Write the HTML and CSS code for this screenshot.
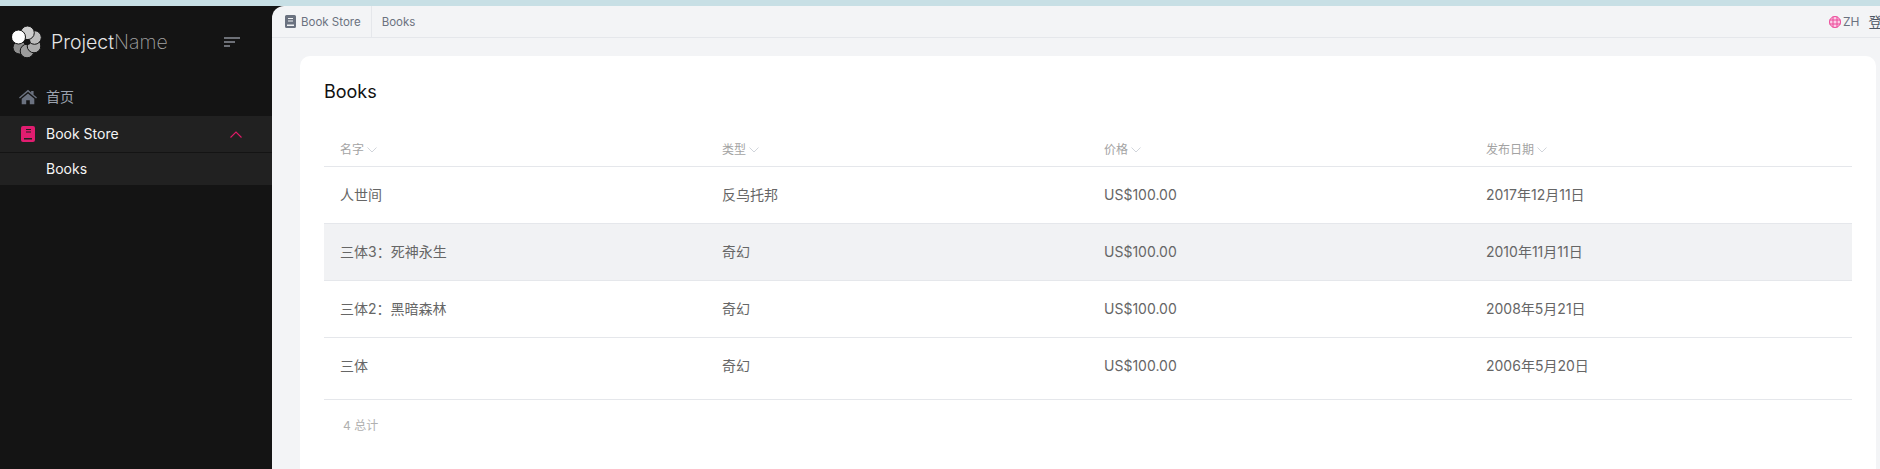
FILE: index.html
```html
<!DOCTYPE html>
<html lang="zh">
  <head>
    <meta charset="UTF-8" />
    <title>Books</title>
    <link rel="stylesheet" href="styles.css">
  </head>
  <body>
    <div class="topStrip"></div>
    <div class="app">
      <aside class="sidebar">
        <div class="brand">
          <svg class="logo" viewBox="0 0 30 32" width="30" height="32">
            <g stroke="#141414" stroke-width="1">
              <circle cx="7.500" cy="21.500" r="6.500" fill="#8e8e8e"/>
              <circle cx="15" cy="25" r="6.800" fill="#9c9c9c"/>
              <circle cx="22" cy="20" r="6.800" fill="#acacac"/>
              <circle cx="22.500" cy="11.500" r="6.800" fill="#bdbdbd"/>
              <circle cx="15.500" cy="6.800" r="6.800" fill="#cfcfcf"/>
            </g>
            <circle cx="15.500" cy="16" r="3" fill="#141414"/>
            <circle cx="6.500" cy="11" r="7" fill="#fff" stroke="#141414" stroke-width="1"/>
          </svg>
          <span class="brandName"><b>Project</b>Name</span>
          <svg class="collapse" viewBox="0 0 16 10" width="16" height="10">
            <path d="M0 1h16M0 5h11M0 9h6" stroke="#8a8f98" stroke-width="1.3" fill="none"/>
          </svg>
        </div>
        <nav class="menu">
          <a class="menuItem">
            <svg class="menuIcon" viewBox="0 0 20 16" width="20" height="16">
              <path d="M10 0 13.500 3V1.200h2.700v4.200L20 8.600l-1 1.100L10 2.200 1 9.700 0 8.600z M3 10 10 4l7 6v6h-5v-4.500H8V16H3z" fill="#6b7280"/>
            </svg>
            <span>首页</span>
          </a>
          <a class="menuItem open">
            <svg class="menuIcon" viewBox="0 0 14 16" width="14" height="16">
              <path fill-rule="evenodd" d="M2 0h10a2 2 0 0 1 2 2v12a2 2 0 0 1-2 2H2a2 2 0 0 1-2-2V2a2 2 0 0 1 2-2zM3 12v1.500h8V12zM5 3v1h5V3zM5 5.500v1h5v-1z" fill="#e11d70"/>
            </svg>
            <span>Book Store</span>
            <svg class="chevron" viewBox="0 0 12 7" width="12" height="7">
              <path d="M.5 6.500 6 1l5.500 5.500" stroke="#e01b68" stroke-width="1.100" fill="none"/>
            </svg>
          </a>
          <a class="subItem">Books</a>
        </nav>
      </aside>
      <main class="main">
        <header class="topbar">
          <div class="crumb first">
            <svg viewBox="0 0 11 13" width="11" height="13">
              <path fill-rule="evenodd" d="M1.500 0h8A1.500 1.500 0 0 1 11 1.500v10a1.500 1.500 0 0 1-1.500 1.500h-8A1.500 1.500 0 0 1 0 11.500v-10A1.500 1.500 0 0 1 1.500 0zM2 9.500V11h7V9.500zM3 3v1h5V3zM3 5.500v1h5v-1z" fill="#6b7280"/>
            </svg>
            <span>Book Store</span>
          </div>
          <div class="crumb">Books</div>
          <div class="actions">
            <span class="lang">
              <svg viewBox="0 0 12 12" width="12" height="12">
                <circle cx="6" cy="6" r="5.500" fill="#fbcfe8" stroke="#ec4899"/>
                <path d="M.5 4h11M.5 8h11M4 .5v11M8 .5v11" stroke="#ec4899" stroke-width="1"/>
              </svg>
              ZH
            </span>
            <span class="login">登录</span>
          </div>
        </header>
        <div class="content">
          <section class="card">
            <h2 class="cardTitle">Books</h2>
            <table class="books">
              <thead>
                <tr>
                  <th><span class="thLabel">名字<svg class="sort" viewBox="0 0 10 6" width="10" height="6"><path d="M.5.5 5 5 9.500.5" stroke="#d1d5db" fill="none"/></svg></span></th>
                  <th><span class="thLabel">类型<svg class="sort" viewBox="0 0 10 6" width="10" height="6"><path d="M.5.5 5 5 9.500.5" stroke="#d1d5db" fill="none"/></svg></span></th>
                  <th><span class="thLabel">价格<svg class="sort" viewBox="0 0 10 6" width="10" height="6"><path d="M.5.5 5 5 9.500.5" stroke="#d1d5db" fill="none"/></svg></span></th>
                  <th><span class="thLabel">发布日期<svg class="sort" viewBox="0 0 10 6" width="10" height="6"><path d="M.5.5 5 5 9.500.5" stroke="#d1d5db" fill="none"/></svg></span></th>
                </tr>
              </thead>
              <tbody>
                <tr><td>人世间</td><td>反乌托邦</td><td>US$100.00</td><td>2017年12月11日</td></tr>
                <tr class="hovered"><td>三体3：死神永生</td><td>奇幻</td><td>US$100.00</td><td>2010年11月11日</td></tr>
                <tr><td>三体2：黑暗森林</td><td>奇幻</td><td>US$100.00</td><td>2008年5月21日</td></tr>
                <tr class="last"><td>三体</td><td>奇幻</td><td>US$100.00</td><td>2006年5月20日</td></tr>
              </tbody>
            </table>
            <div class="total">4 总计</div>
          </section>
        </div>
      </main>
    </div>
  </body>
</html>
```

FILE: styles.css
```css
* {
  box-sizing: border-box;
}
html,
body {
  margin: 0;
  height: 100%;
  overflow: hidden;
}
body {
  font-family: Inter, "Noto Sans CJK SC", sans-serif;
  font-size: 14px;
  line-height: 20px;
  color: #666;
  background: #141414;
  display: flex;
  flex-direction: column;
}
.topStrip {
  height: 6px;
  background: #c7dfe5;
  flex: none;
}
.app {
  flex: 1;
  display: flex;
  min-height: 0;
}
.sidebar {
  width: 272px;
  flex: none;
  background: #141414;
}
.brand {
  height: 72px;
  display: flex;
  align-items: center;
  padding: 0 32px 0 12px;
}
.logo {
  flex: none;
}
.brandName {
  margin-left: 9px;
  font-size: 19.5px;
  font-weight: 200;
  color: #a3a3a3;
}
.brandName b {
  font-weight: 300;
  color: #e5e5e5;
}
.collapse {
  margin-left: auto;
}
.menu {
  display: flex;
  flex-direction: column;
}
.menuItem {
  height: 37px;
  margin-bottom: 1px;
  display: flex;
  align-items: center;
  padding: 0 30px 0 19px;
  color: #9ca3af;
}
.menuItem span {
  margin-left: 9px;
}
.menuItem .menuIcon {
  width: 18px;
  height: 16px;
}
.menuItem.open {
  background: #212121;
  color: #f5f5f5;
  margin-bottom: 0;
  border-bottom: 1px solid #141414;
}
.chevron {
  margin-left: auto;
}
.subItem {
  height: 32px;
  display: flex;
  align-items: center;
  padding-left: 46px;
  background: #212121;
  color: #f5f5f5;
}
.main {
  flex: 1;
  min-width: 0;
  background: #f3f4f6;
  border-top-left-radius: 12px;
  display: flex;
  flex-direction: column;
  overflow: hidden;
}
.topbar {
  height: 32px;
  flex: none;
  display: flex;
  align-items: center;
  border-bottom: 1px solid #e5e7eb;
  font-size: 11.5px;
}
.crumb {
  height: 100%;
  display: flex;
  align-items: center;
  padding: 0 10px;
  color: #6b7280;
}
.crumb.first {
  border-right: 1px solid #e5e7eb;
  padding-left: 13px;
}
.crumb svg {
  margin-right: 5px;
}
.actions {
  margin-left: auto;
  display: flex;
  align-items: center;
  width: 51px;
  flex: none;
  overflow: hidden;
  white-space: nowrap;
}
.lang {
  display: flex;
  align-items: center;
  gap: 2px;
  font-size: 12px;
  color: #6b7280;
}
.login {
  margin-left: 9px;
  font-size: 14px;
  color: #4b5563;
}
.content {
  flex: 1;
  min-height: 0;
  padding: 18px 4px 0 28px;
}
.card {
  background: #fff;
  border-radius: 10px 10px 0 0;
  padding: 24px;
  height: 500px;
}
.cardTitle {
  margin: 0;
  font-size: 18px;
  font-weight: 400;
  line-height: 24px;
  color: #111;
}
.books {
  width: 100%;
  margin-top: 28px;
  border-collapse: collapse;
  table-layout: fixed;
}
.books th {
  height: 34px;
  text-align: left;
  font-weight: 400;
  font-size: 12px;
  color: #a3a3a3;
  padding: 2px 15px 0 16px;
  border-bottom: 1px solid #e5e7eb;
}
.thLabel {
  display: inline-flex;
  align-items: center;
}
.sort {
  margin-left: 3px;
}
.books td {
  height: 57px;
  padding: 0 15px 0 16px;
  border-bottom: 1px solid #e5e7eb;
}
.books tr.hovered td {
  background: #f1f2f4;
}
.books tr.last td {
  height: 62px;
  padding-bottom: 5px;
}
.total {
  margin-top: 16px;
  padding-left: 19px;
  font-size: 12px;
  color: #b0b0b0;
}
```
